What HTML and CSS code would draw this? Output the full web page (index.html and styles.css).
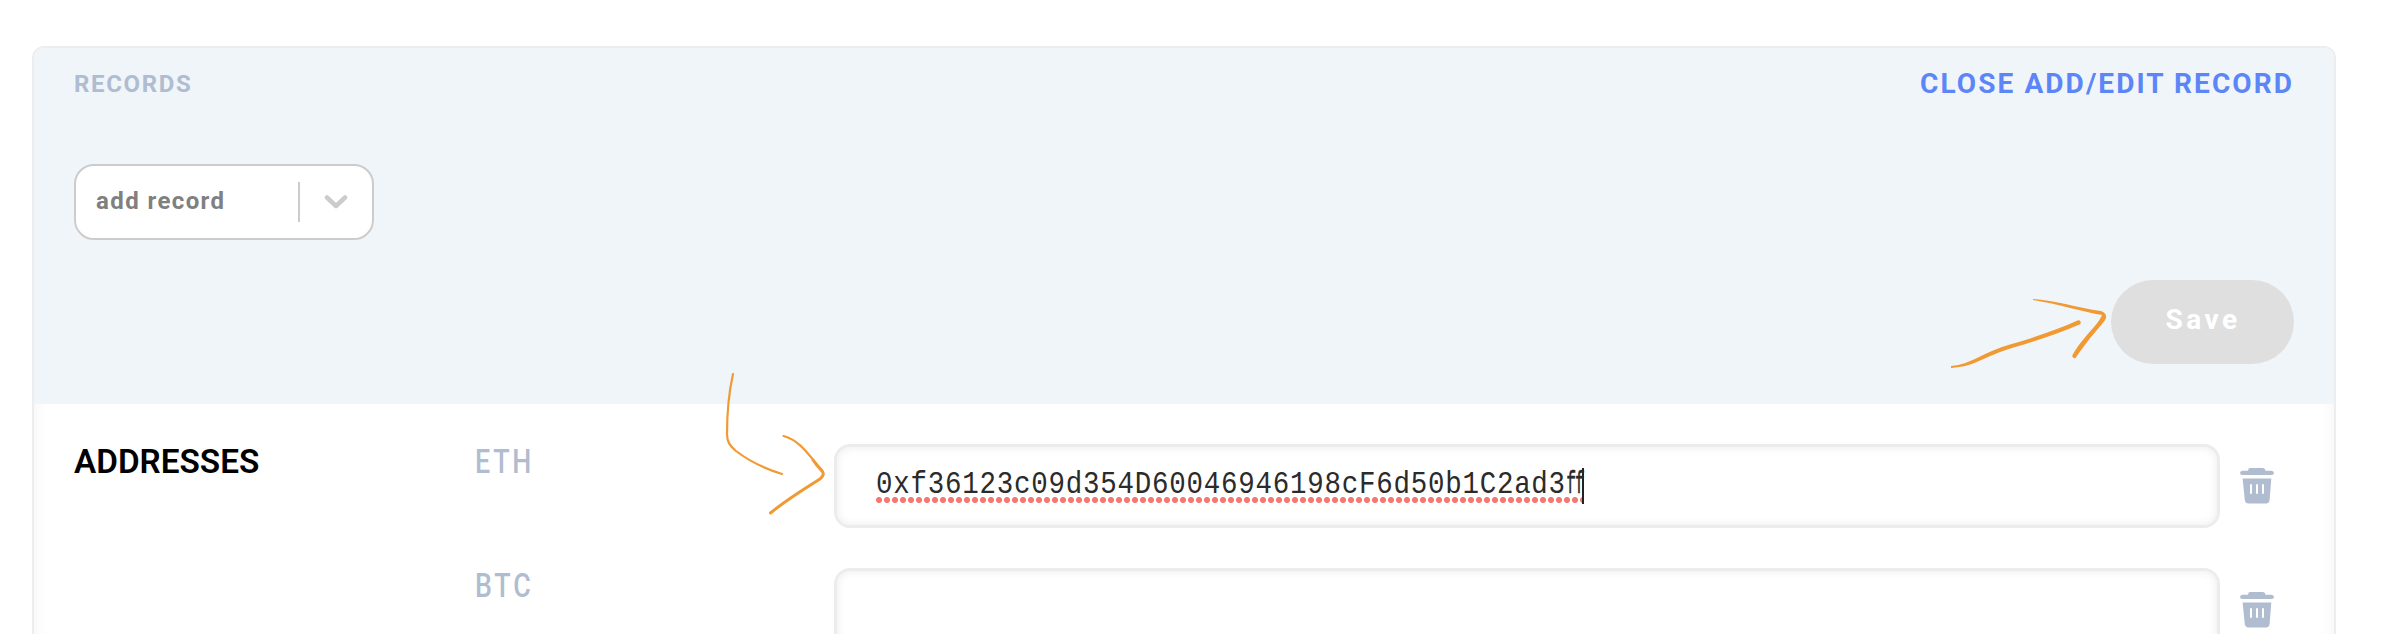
FILE: index.html
```html
<!DOCTYPE html>
<html lang="en">
<head>
<meta charset="utf-8">
<title>Records</title>
<link rel="stylesheet" href="styles.css">
</head>
<body>
<svg class="defs" width="0" height="0" aria-hidden="true">
  <symbol id="trash" viewBox="0 0 34 36">
    <path d="M10 0H23Q25 0 25.5 2.7H31.5Q34 3 34 5T31.5 7H2.5Q0 7 0 5T2.5 2.7H8Q8 0 10 0Z"/>
    <path fill-rule="evenodd" d="M2.6 10.6H31.3L29.6 32Q29.2 35.4 26 35.4H8.500Q5.200 35.400 4.800 32ZM10 16.300V25.700H12V16.300ZM16 16.300V25.700H18V16.300ZM22 16.300V25.700H24V16.300Z"/>
  </symbol>
</svg>
<main class="card">
  <header class="head">
    <div class="bar">
      <h2 class="title">RECORDS</h2>
      <a class="close">CLOSE ADD/EDIT RECORD</a>
    </div>
    <div class="select">
      <span class="placeholder">add record</span>
      <span class="divider"></span>
      <svg class="chevron" width="24" height="16" viewBox="0 0 24 16"><path d="M3 3.500L12 12L21 3.500"/></svg>
    </div>
    <button class="save">Save</button>
  </header>
  <section class="records">
    <h3 class="group">ADDRESSES</h3>
    <div class="rows">
      <div class="row">
        <span class="coin">ETH</span>
        <div class="field"><span class="value"><span class="address">0xf36123c09d354D60046946198cF6d50b1C2ad3<span class="tight">ff</span></span></span><span class="caret"></span></div>
        <svg class="trash" width="34" height="36"><use href="#trash"/></svg>
      </div>
      <div class="row">
        <span class="coin">BTC</span>
        <div class="field"></div>
        <svg class="trash" width="34" height="36"><use href="#trash"/></svg>
      </div>
    </div>
  </section>
</main>
<svg class="notes" width="2386" height="634" viewBox="0 0 2386 634" aria-hidden="true">
  <path d="M1951 366L1951 368C1963 367 1970 365 1979 361C1990 356 1999 352 2012 348C2036 341 2060 333 2079.500 324.500A2.200 2.200 0 0 0 2077.500 320.500C2059 329 2036 337 2010 344.500C1998 348 1988 352.500 1977 358C1968 362 1962 365 1951 366Z"/>
  <path d="M2033 299C2055 300 2078 308 2101 311Q2107 313 2106 318Q2105 321 2097 330C2089 339 2081 350 2076 357.500A2.200 2.200 0 0 1 2072.500 355C2078 345 2087 335 2094 327Q2100 320 2102 315C2084 312 2058 304 2033 300Z"/>
  <path class="line" d="M733 374C729 392 727 412 727 434C727 442 730 446 736 451C749 461 766 469 782 474"/>
  <path class="line" d="M783.500 436C802 441 811 459 822 470"/>
  <path class="line thick" d="M813 460Q817 466 821 470Q826 474 820 479C804 489 786 500 770.500 513"/>
</svg>
</body>
</html>
```
FILE: styles.css
```css
* { box-sizing: border-box; }
body {
  margin: 0;
  padding: 46px 50px 0 32px;
  height: 634px;
  overflow: hidden;
  position: relative;
  background: #fff;
  font-family: Roboto, "Liberation Sans", sans-serif;
}
h2, h3 { margin: 0; }
.defs { position: absolute; }
.card {
  width: 2304px;
  height: 588px;
  overflow: hidden;
  border: 2px solid #ededed;
  border-bottom: 0;
  border-radius: 12px 12px 0 0;
  background: #fff;
  box-shadow: inset 18px 0 18px -18px rgba(0, 0, 0, 0.05), inset -18px 0 18px -18px rgba(0, 0, 0, 0.05);
}
.head {
  display: flex;
  flex-direction: column;
  height: 356px;
  padding: 0 40px;
  background: #f0f5fa;
}
.bar {
  display: flex;
  justify-content: space-between;
  align-items: center;
  height: 70px;
  padding-top: 2px;
}
.title {
  color: #b0bccf;
  font-size: 24px;
  font-weight: 700;
  letter-spacing: 1.650px;
  line-height: 66px;
}
.close {
  color: #5c85f7;
  font-size: 28px;
  font-weight: 700;
  letter-spacing: 2.080px;
  line-height: 66px;
}
.select {
  display: flex;
  align-items: center;
  width: 300px;
  height: 76px;
  margin-top: 46px;
  padding: 0 24px 0 20px;
  background: #fff;
  border: 2px solid #ccc;
  border-radius: 20px;
}
.placeholder {
  flex: 1;
  color: #808080;
  font-size: 24px;
  font-weight: 700;
  letter-spacing: 1.400px;
  line-height: 30px;
  padding-bottom: 3px;
}
.divider { width: 2px; height: 40px; margin-right: 24px; background: #ccc; }
.chevron { fill: none; stroke: #ccc; stroke-width: 4.500; stroke-linecap: round; stroke-linejoin: round; }
.save {
  align-self: flex-end;
  width: 183px;
  height: 84px;
  margin-top: 40px;
  padding: 0 0 4px 1px;
  border: 0;
  border-radius: 42px;
  background: #dfdfdf;
  color: #fff;
  font: 700 28px/34px Roboto, sans-serif;
  letter-spacing: 3.500px;
}
.records { display: flex; padding: 40px 60px 0 40px; }
.group {
  width: 401px;
  color: #000;
  font-size: 33.300px;
  font-weight: 600;
  line-height: 36px;
}
.rows { flex: 1; display: flex; flex-direction: column; gap: 40px; }
.row { display: flex; height: 84px; align-items: center; }
.coin {
  align-self: flex-start;
  width: 359px;
  color: #b0bccf;
  font: 500 33.500px/36px Roboto, sans-serif;
  letter-spacing: 3.500px;
  transform: scaleX(0.8);
  transform-origin: left;
}
.field {
  display: flex;
  align-items: center;
  width: 1386px;
  height: 84px;
  padding-left: 39px;
  border: 3px solid #ececec;
  border-radius: 16px;
  background: #fff;
  box-shadow: inset 0 0 10px rgba(0, 0, 0, 0.08);
}
.value {
  width: 706px;
  height: 36px;
  background: radial-gradient(circle at 3px 3px, #f37a70 2.700px, transparent 3.300px) 0 29px / 8px 6px repeat-x;
}
.address {
  display: inline-block;
  white-space: nowrap;
  color: #2b2b2b;
  font: 30.500px/35px "Liberation Mono", monospace;
  letter-spacing: 0.860px;
  transform: scaleX(0.9);
  transform-origin: left;
}
.tight { display: inline-block; width: 17px; transform: scaleX(0.6); transform-origin: left; letter-spacing: -2px; -webkit-text-stroke: 0.5px #2b2b2b; }
.caret { width: 2px; height: 36px; background: #222; }
.trash { margin-left: 20px; fill: #b0bccf; }
.notes { position: absolute; left: 0; top: 0; fill: #f19a33; pointer-events: none; }
.line { fill: none; stroke: #f19a33; stroke-width: 2.200; stroke-linecap: round; }
.thick { stroke-width: 3; }
```
